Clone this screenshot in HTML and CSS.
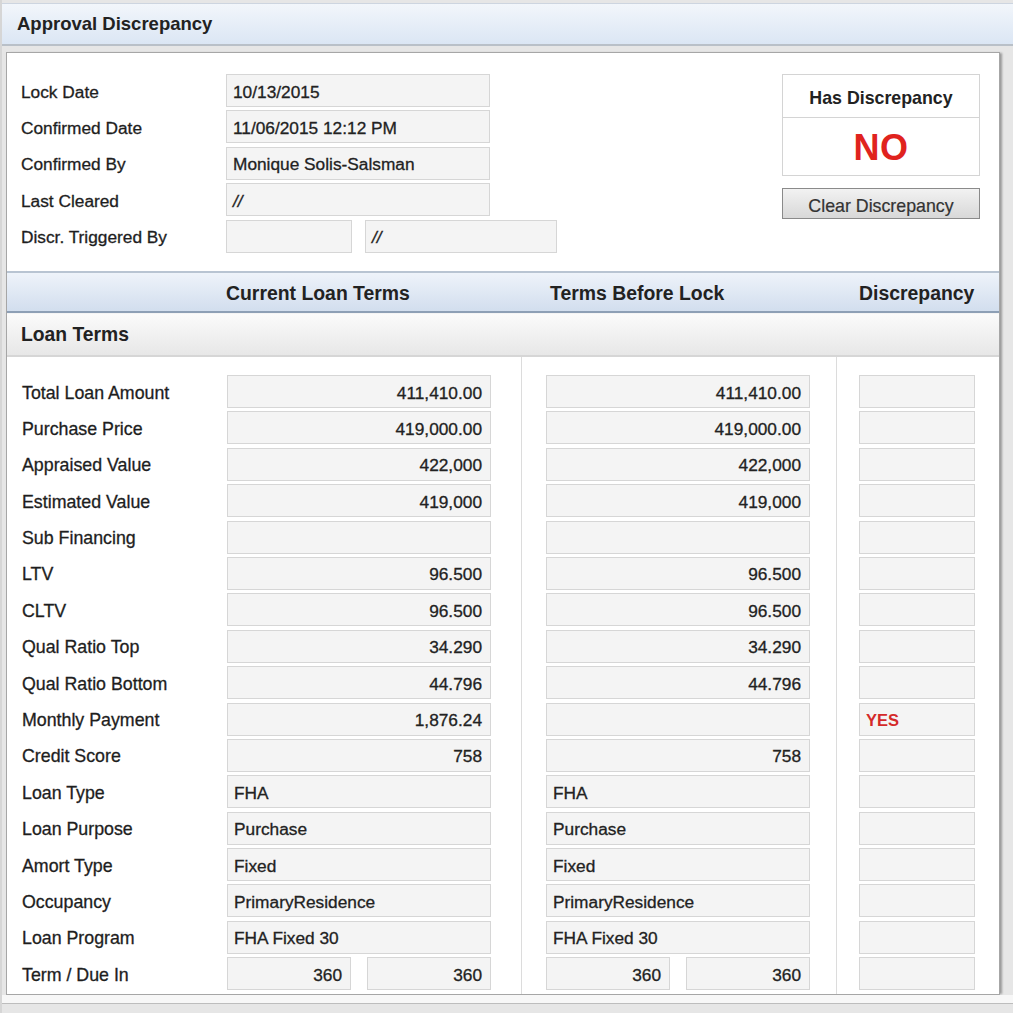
FILE: index.html
```html
<!DOCTYPE html>
<html>
<head>
<meta charset="utf-8">
<link rel="stylesheet" href="styles.css">
</head>
<body>
<div class="titlebar">Approval Discrepancy</div>
<div class="panel">
  <div class="top">
    <div class="form">
      <div class="frow"><span class="flabel">Lock Date</span><span class="field w-full">10/13/2015</span></div>
      <div class="frow"><span class="flabel">Confirmed Date</span><span class="field w-full">11/06/2015 12:12 PM</span></div>
      <div class="frow"><span class="flabel">Confirmed By</span><span class="field w-full">Monique Solis-Salsman</span></div>
      <div class="frow"><span class="flabel">Last Cleared</span><span class="field w-full ital">//</span></div>
      <div class="frow"><span class="flabel">Discr. Triggered By</span><span class="field w-small"></span><span class="field w-date ital">//</span></div>
    </div>
    <div class="status">
      <div class="status-box">
        <div class="status-head">Has Discrepancy</div>
        <div class="status-val">NO</div>
      </div>
      <button class="btn">Clear Discrepancy</button>
    </div>
  </div>

  <div class="colhead">
    <div class="c1"><span class="hlabel"></span><span class="htext">Current Loan Terms</span></div>
    <div class="c2"><span class="htext h2">Terms Before Lock</span></div>
    <div class="c3"><span class="htext">Discrepancy</span></div>
  </div>
  <div class="section">Loan Terms</div>

  <div class="body">
    <div class="c1 col">
      <div class="row"><span class="label">Total Loan Amount</span><span class="field w-full num">411,410.00</span></div>
      <div class="row"><span class="label">Purchase Price</span><span class="field w-full num">419,000.00</span></div>
      <div class="row"><span class="label">Appraised Value</span><span class="field w-full num">422,000</span></div>
      <div class="row"><span class="label">Estimated Value</span><span class="field w-full num">419,000</span></div>
      <div class="row"><span class="label">Sub Financing</span><span class="field w-full num"></span></div>
      <div class="row"><span class="label">LTV</span><span class="field w-full num">96.500</span></div>
      <div class="row"><span class="label">CLTV</span><span class="field w-full num">96.500</span></div>
      <div class="row"><span class="label">Qual Ratio Top</span><span class="field w-full num">34.290</span></div>
      <div class="row"><span class="label">Qual Ratio Bottom</span><span class="field w-full num">44.796</span></div>
      <div class="row"><span class="label">Monthly Payment</span><span class="field w-full num">1,876.24</span></div>
      <div class="row"><span class="label">Credit Score</span><span class="field w-full num">758</span></div>
      <div class="row"><span class="label">Loan Type</span><span class="field w-full">FHA</span></div>
      <div class="row"><span class="label">Loan Purpose</span><span class="field w-full">Purchase</span></div>
      <div class="row"><span class="label">Amort Type</span><span class="field w-full">Fixed</span></div>
      <div class="row"><span class="label">Occupancy</span><span class="field w-full">PrimaryResidence</span></div>
      <div class="row"><span class="label">Loan Program</span><span class="field w-full">FHA Fixed 30</span></div>
      <div class="row"><span class="label">Term / Due In</span><span class="field w-half num">360</span><span class="field w-half num">360</span></div>
      <div class="row"><span class="label"></span><span class="field w-full"></span></div>
    </div>
    <div class="c2 col">
      <div class="row"><span class="field w-full num">411,410.00</span></div>
      <div class="row"><span class="field w-full num">419,000.00</span></div>
      <div class="row"><span class="field w-full num">422,000</span></div>
      <div class="row"><span class="field w-full num">419,000</span></div>
      <div class="row"><span class="field w-full num"></span></div>
      <div class="row"><span class="field w-full num">96.500</span></div>
      <div class="row"><span class="field w-full num">96.500</span></div>
      <div class="row"><span class="field w-full num">34.290</span></div>
      <div class="row"><span class="field w-full num">44.796</span></div>
      <div class="row"><span class="field w-full num"></span></div>
      <div class="row"><span class="field w-full num">758</span></div>
      <div class="row"><span class="field w-full">FHA</span></div>
      <div class="row"><span class="field w-full">Purchase</span></div>
      <div class="row"><span class="field w-full">Fixed</span></div>
      <div class="row"><span class="field w-full">PrimaryResidence</span></div>
      <div class="row"><span class="field w-full">FHA Fixed 30</span></div>
      <div class="row"><span class="field w-half num">360</span><span class="field w-half num">360</span></div>
      <div class="row"><span class="field w-full"></span></div>
    </div>
    <div class="c3 col">
      <div class="row"><span class="field w-disc"></span></div>
      <div class="row"><span class="field w-disc"></span></div>
      <div class="row"><span class="field w-disc"></span></div>
      <div class="row"><span class="field w-disc"></span></div>
      <div class="row"><span class="field w-disc"></span></div>
      <div class="row"><span class="field w-disc"></span></div>
      <div class="row"><span class="field w-disc"></span></div>
      <div class="row"><span class="field w-disc"></span></div>
      <div class="row"><span class="field w-disc"></span></div>
      <div class="row"><span class="field w-disc yes">YES</span></div>
      <div class="row"><span class="field w-disc"></span></div>
      <div class="row"><span class="field w-disc"></span></div>
      <div class="row"><span class="field w-disc"></span></div>
      <div class="row"><span class="field w-disc"></span></div>
      <div class="row"><span class="field w-disc"></span></div>
      <div class="row"><span class="field w-disc"></span></div>
      <div class="row"><span class="field w-disc"></span></div>
      <div class="row"><span class="field w-disc"></span></div>
    </div>
  </div>
</div>
<div class="footer"></div>
</body>
</html>
```

FILE: styles.css
```css
html, body {
  margin: 0;
  padding: 0;
}
body {
  background: #e6e6e6;
  font-family: "Liberation Sans", Arial, sans-serif;
  color: #1e1e1e;
  padding-top: 3px;
  width: 1013px;
  height: 1013px;
  overflow: hidden;
  box-sizing: border-box;
  border-left: 2px solid #d6d6d6;
}
.titlebar {
  height: 40px;
  border-top: 1px solid #cdd5e0;
  border-bottom: 2px solid #b9c0c8;
  background: linear-gradient(#f2f6fb, #dbe6f4);
  padding-left: 15px;
  display: flex;
  align-items: center;
  font-weight: bold;
  font-size: 18.5px;
  color: #222;
}
.panel {
  margin: 6px 13px 0 4px;
  height: 943px;
  box-sizing: border-box;
  border: 1px solid #a6a6a6;
  background: #fff;
  box-shadow: 3px 0 2px -1px #9a9a9a;
  overflow: hidden;
}
.top {
  height: 218px;
  box-sizing: border-box;
  padding: 21px 19px 0 14px;
  display: flex;
  justify-content: space-between;
}
.form {
  display: flex;
  flex-direction: column;
  gap: 3.4px;
}
.frow {
  display: flex;
  align-items: center;
  height: 33px;
}
.flabel {
  width: 205px;
  font-size: 17.3px;
  padding-top: 3px;
  -webkit-text-stroke: 0.3px #1e1e1e;
}
.field {
  box-sizing: border-box;
  height: 33px;
  background: #f4f4f4;
  border: 1.5px solid #d6d6d6;
  display: flex;
  align-items: center;
  padding: 3px 7px 0 6px;
  font-size: 17.3px;
  color: #222;
  white-space: nowrap;
  -webkit-text-stroke: 0.3px #222;
}
.ital {
  font-style: italic;
}
.w-full { width: 264px; }
.w-small { width: 126px; margin-right: 13px; }
.w-date { width: 192px; }
.w-half { width: 124px; }
.w-half + .w-half { margin-left: 16px; }
.w-disc { width: 116px; }
.num {
  justify-content: flex-end;
  padding-right: 8px;
}
.status {
  width: 198px;
  display: flex;
  flex-direction: column;
}
.status-box {
  border: 1.5px solid #d4d4d4;
  height: 102px;
  box-sizing: border-box;
}
.status-head {
  height: 43px;
  box-sizing: border-box;
  border-bottom: 1.5px solid #d4d4d4;
  display: flex;
  align-items: center;
  justify-content: center;
  font-weight: bold;
  font-size: 17.8px;
  padding-top: 4px;
  color: #222;
}
.status-val {
  display: flex;
  align-items: center;
  justify-content: center;
  height: 55px;
  font-weight: bold;
  font-size: 36px;
  color: #e0231e;
  padding-top: 2px;
  letter-spacing: 0.5px;
}
.btn {
  margin-top: 12px;
  height: 31px;
  border: 1.5px solid #8a8a8a;
  background: linear-gradient(#f2f2f2, #d8d8d8);
  font-family: "Liberation Sans", Arial, sans-serif;
  font-size: 17.8px;
  color: #333;
  padding: 5px 0 0 0;
  border-radius: 0;
  -webkit-text-stroke: 0.2px #333;
}
.colhead {
  display: flex;
  height: 42px;
  box-sizing: border-box;
  border-top: 2px solid #b8c4d2;
  border-bottom: 2px solid #8d9fb5;
  background: linear-gradient(#eef3fa, #d2deee);
  align-items: center;
}
.htext {
  font-weight: bold;
  font-size: 19.4px;
  color: #222;
  padding-top: 2px;
}
.h2 { padding-left: 4px; }
.hlabel {
  display: inline-block;
  width: 204px;
}
.colhead .c1, .colhead .c2, .colhead .c3 {
  display: flex;
  align-items: center;
}
.colhead .c1, .colhead .c2 {
  border-right: none;
}
.section {
  height: 44px;
  box-sizing: border-box;
  background: linear-gradient(#fbfbfb, #e7e7e7);
  border-top: 1px solid #f4f4f4;
  border-bottom: 2px solid #d6d6d6;
  padding-left: 14px;
  display: flex;
  align-items: center;
  font-weight: bold;
  font-size: 19.3px;
  color: #222;
}
.body {
  display: flex;
  height: 700px;
}
.c1 {
  width: 515px;
  box-sizing: border-box;
  padding-left: 15px;
  border-right: 1.5px solid #dcdcdc;
}
.c2 {
  width: 315px;
  box-sizing: border-box;
  padding-left: 24px;
  border-right: 1.5px solid #dcdcdc;
}
.c3 {
  flex: 1;
  padding-left: 22px;
}
.col {
  display: flex;
  flex-direction: column;
  gap: 3.4px;
  padding-top: 18px;
}
.row {
  display: flex;
  align-items: center;
  height: 33px;
}
.label {
  width: 205px;
  font-size: 17.8px;
  padding-top: 3px;
  color: #1e1e1e;
  -webkit-text-stroke: 0.3px #1e1e1e;
}
.yes {
  color: #d42a2a;
  font-weight: bold;
  font-size: 16.5px;
  padding-left: 6px;
  -webkit-text-stroke: 0;
}
.footer {
  margin-top: 0;
  height: 8px;
  background: #f7f7f7;
  border-bottom: 1px solid #bdbdbd;
  margin-right: 0;
}
```
